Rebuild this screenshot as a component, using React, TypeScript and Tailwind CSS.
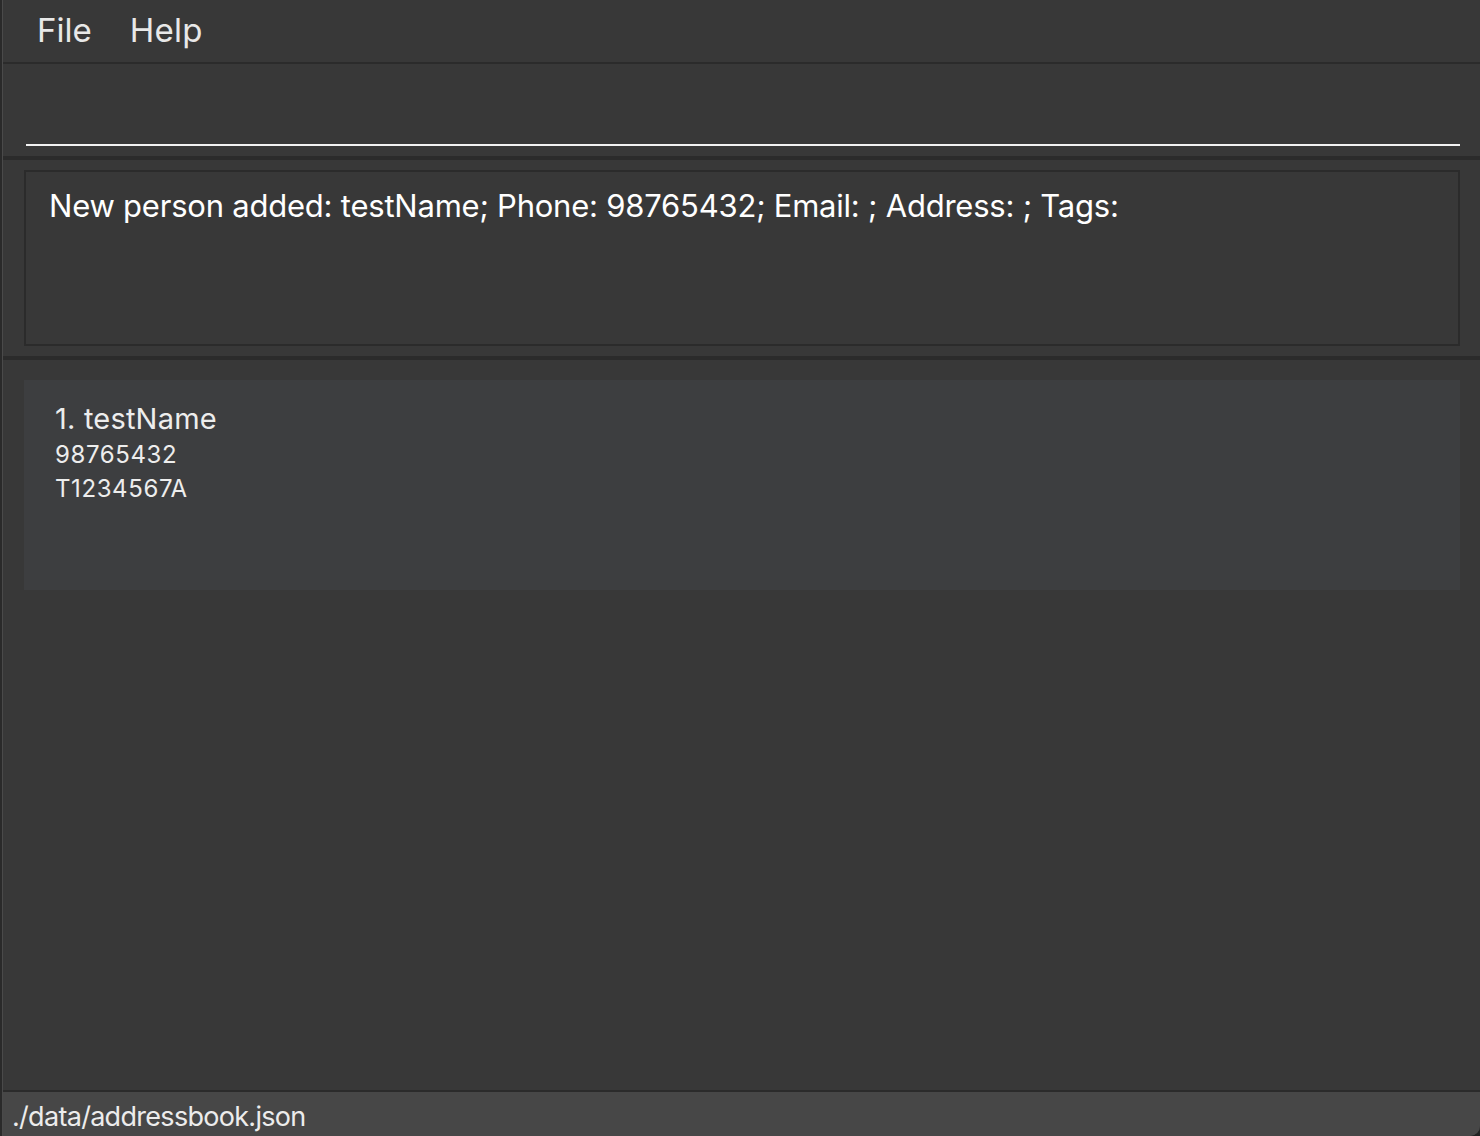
import React from "react";

export default function App() {
  return (
    <div
      className="w-[1480px] h-[1136px] flex bg-[#222222] overflow-hidden"
      style={{ fontFamily: "Inter, 'Noto Sans', sans-serif" }}
    >
      <div className="w-[2px] bg-[#2a2a2a]" />
      <div className="w-[1px] bg-[#4a4a4a]" />
      <div className="flex-1 flex flex-col bg-[#383838] rounded-br-[10px] overflow-hidden">
        {/* Menu bar */}
        <div className="h-[62px] flex items-center pl-[34px] gap-[38px] text-[33px] text-[#e8e8e8] tracking-[0px]">
          <span>File</span>
          <span className="tracking-[0.3px]">Help</span>
        </div>
        <div className="h-[2px] bg-[#2b2b2b]" />
        {/* Command box */}
        <div className="h-[92px] flex flex-col justify-end pl-[23px] pr-[20px] pb-[10px]">
          <div className="h-[2px] bg-[#f2f2f2]" />
        </div>
        <div className="h-[4px] bg-[#2b2b2b]" />
        {/* Result display */}
        <div className="h-[196px] pt-[10px] pb-[10px] pl-[21px] pr-[20px]">
          <div className="h-full border-2 border-[#2b2b2b] pl-[23px] pt-[11px] text-[31px] text-white tracking-[-0.22px]">
            New person added: testName; Phone: 98765432; Email: ; Address: ; Tags:
          </div>
        </div>
        <div className="h-[4px] bg-[#2b2b2b]" />
        {/* List */}
        <div className="flex-1 pt-[20px] pl-[21px] pr-[20px]">
          <div className="h-[210px] bg-[#3d3e40] pl-[31px] pt-[20px] text-[#ededed]">
            <div className="text-[29px] leading-[38px] tracking-[0.2px]">1. testName</div>
            <div className="text-[24px] leading-[34px] tracking-[0.6px]">98765432</div>
            <div className="text-[24px] leading-[34px] tracking-[0.6px]">T1234567A</div>
          </div>
        </div>
        <div className="h-[2px] bg-[#2b2b2b]" />
        {/* Status bar */}
        <div className="h-[44px] bg-[#474747] flex items-center pl-[9px] pt-[6px] text-[27px] text-[#ececec] tracking-[-0.7px]">
          ./data/addressbook.json
        </div>
      </div>
    </div>
  );
}
